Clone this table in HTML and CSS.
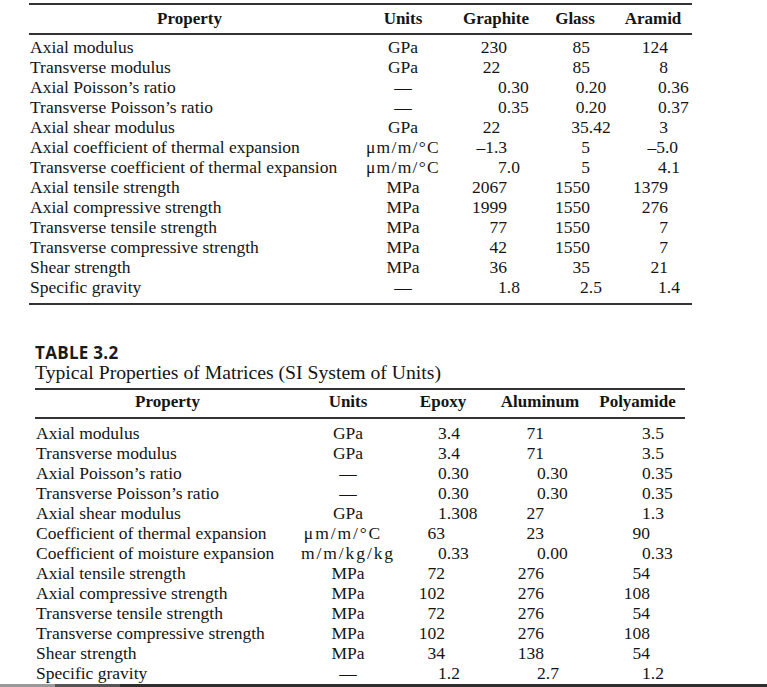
FILE: index.html
```html
<!DOCTYPE html>
<html lang="en">
<head>
<meta charset="utf-8">
<title>Typical Properties of Fibers and Matrices</title>
<link rel="stylesheet" href="styles.css">
</head>
<body>
<main class="page">
  <table class="data t1">
    <colgroup>
      <col class="w-prop1"><col class="w-unit1"><col class="w-v1"><col class="w-v2"><col class="w-v3">
    </colgroup>
    <thead>
      <tr>
        <th class="h-prop1">Property</th>
        <th class="h-unit">Units</th>
        <th>Graphite</th>
        <th class="h-shift">Glass</th>
        <th class="h-shift">Aramid</th>
      </tr>
    </thead>
    <tbody>
      <tr><td class="prop">Axial modulus</td><td class="unit">GPa</td><td class="gi">230</td><td class="si">85</td><td class="ai">124</td></tr>
      <tr><td class="prop">Transverse modulus</td><td class="unit">GPa</td><td class="gc">22</td><td class="si">85</td><td class="ai">8</td></tr>
      <tr><td class="prop">Axial Poisson’s ratio</td><td class="unit">—</td><td class="gd">0.30</td><td class="sd">0.20</td><td class="ad">0.36</td></tr>
      <tr><td class="prop">Transverse Poisson’s ratio</td><td class="unit">—</td><td class="gd">0.35</td><td class="sd">0.20</td><td class="ad">0.37</td></tr>
      <tr><td class="prop">Axial shear modulus</td><td class="unit">GPa</td><td class="gc">22</td><td class="sd">35.42</td><td class="ai">3</td></tr>
      <tr><td class="prop">Axial coefficient of thermal expansion</td><td class="unit sp1">μm/m/°C</td><td class="gi">–1.3</td><td class="si">5</td><td class="an">–5.0</td></tr>
      <tr><td class="prop">Transverse coefficient of thermal expansion</td><td class="unit sp1">μm/m/°C</td><td class="gd">7.0</td><td class="si">5</td><td class="ad">4.1</td></tr>
      <tr><td class="prop">Axial tensile strength</td><td class="unit">MPa</td><td class="gi">2067</td><td class="si">1550</td><td class="ai">1379</td></tr>
      <tr><td class="prop">Axial compressive strength</td><td class="unit">MPa</td><td class="gi">1999</td><td class="si">1550</td><td class="ai">276</td></tr>
      <tr><td class="prop">Transverse tensile strength</td><td class="unit">MPa</td><td class="gi">77</td><td class="si">1550</td><td class="ai">7</td></tr>
      <tr><td class="prop">Transverse compressive strength</td><td class="unit">MPa</td><td class="gi">42</td><td class="si">1550</td><td class="ai">7</td></tr>
      <tr><td class="prop">Shear strength</td><td class="unit">MPa</td><td class="gi">36</td><td class="si">35</td><td class="ai">21</td></tr>
      <tr><td class="prop">Specific gravity</td><td class="unit">—</td><td class="gd">1.8</td><td class="sd">2.5</td><td class="ad">1.4</td></tr>
    </tbody>
  </table>

  <section class="table2">
    <div class="caption">
      <div class="label">TABLE 3.2</div>
      <div class="title">Typical Properties of Matrices (SI System of Units)</div>
    </div>
    <table class="data t2">
      <colgroup>
        <col class="w-prop2"><col class="w-unit2"><col class="w-e"><col class="w-l"><col class="w-p">
      </colgroup>
      <thead>
        <tr>
          <th class="h-prop2">Property</th>
          <th class="h-unit2">Units</th>
          <th class="h-epoxy">Epoxy</th>
          <th>Aluminum</th>
          <th class="h-poly">Polyamide</th>
        </tr>
      </thead>
      <tbody>
        <tr><td class="prop">Axial modulus</td><td class="unit">GPa</td><td class="ed">3.4</td><td class="li">71</td><td class="pd">3.5</td></tr>
        <tr><td class="prop">Transverse modulus</td><td class="unit">GPa</td><td class="ed">3.4</td><td class="li">71</td><td class="pd">3.5</td></tr>
        <tr><td class="prop">Axial Poisson’s ratio</td><td class="unit">—</td><td class="ed">0.30</td><td class="ld">0.30</td><td class="pd">0.35</td></tr>
        <tr><td class="prop">Transverse Poisson’s ratio</td><td class="unit">—</td><td class="ed">0.30</td><td class="ld">0.30</td><td class="pd">0.35</td></tr>
        <tr><td class="prop">Axial shear modulus</td><td class="unit">GPa</td><td class="ed">1.308</td><td class="li">27</td><td class="pd">1.3</td></tr>
        <tr><td class="prop">Coefficient of thermal expansion</td><td class="unit sp2 u-left">μm/m/°C</td><td class="ei">63</td><td class="li">23</td><td class="pi">90</td></tr>
        <tr><td class="prop">Coefficient of moisture expansion</td><td class="unit sp2">m/m/kg/kg</td><td class="ed">0.33</td><td class="ld">0.00</td><td class="pd">0.33</td></tr>
        <tr><td class="prop">Axial tensile strength</td><td class="unit">MPa</td><td class="ei">72</td><td class="li">276</td><td class="pi">54</td></tr>
        <tr><td class="prop">Axial compressive strength</td><td class="unit">MPa</td><td class="ei">102</td><td class="li">276</td><td class="pi">108</td></tr>
        <tr><td class="prop">Transverse tensile strength</td><td class="unit">MPa</td><td class="ei">72</td><td class="li">276</td><td class="pi">54</td></tr>
        <tr><td class="prop">Transverse compressive strength</td><td class="unit">MPa</td><td class="ei">102</td><td class="li">276</td><td class="pi">108</td></tr>
        <tr><td class="prop">Shear strength</td><td class="unit">MPa</td><td class="ei">34</td><td class="li">138</td><td class="pi">54</td></tr>
        <tr><td class="prop">Specific gravity</td><td class="unit">—</td><td class="ed">1.2</td><td class="ld">2.7</td><td class="pd">1.2</td></tr>
      </tbody>
    </table>
  </section>
  <div class="page-edge"></div>
</main>
</body>
</html>
```

FILE: styles.css
```css
html, body {
  margin: 0;
  padding: 0;
  background: #ffffff;
}

.page {
  width: 767px;
  height: 687px;
  overflow: hidden;
  color: #141414;
  font-family: "Liberation Serif", "Times New Roman", serif;
  font-size: 17.5px;
  line-height: 20px;
}

/* ---------- tables ---------- */
.data {
  border-collapse: separate;
  border-spacing: 0;
  table-layout: fixed;
}

.data th,
.data td {
  padding: 0;
  height: 20px;
  line-height: 20px;
  white-space: nowrap;
  font-weight: normal;
  vertical-align: top;
}

.data th {
  font-weight: bold;
  font-size: 17px;
  text-align: center;
  border-top: 2px solid #333;
  border-bottom: 2px solid #333;
}

.t1 {
  width: 663px;
  margin: 3px 0 0 29px;
}

.t1 th {
  padding-top: 4px;
  padding-bottom: 4px;
}

.t1 tbody tr:first-child td { padding-top: 2px; }
.t1 tbody tr:last-child td {
  padding-bottom: 6px;
  border-bottom: 2px solid #333;
}

.w-prop1 { width: 321px; }
.w-unit1 { width: 106px; }
.w-v1 { width: 80px; }
.w-v2 { width: 78px; }
.w-v3 { width: 78px; }

.h-prop1 { padding-right: 9px; }
.h-shift { padding-left: 14px; }

.prop { text-align: left; padding-left: 1px !important; }
.unit { text-align: center; }
.sp1 { letter-spacing: 1.3px; }
.sp2 { letter-spacing: 1.9px; }
.u-left { padding-right: 10px !important; }

/* graphite */
.gi { text-align: right; padding-right: 29px !important; }
.gd { text-align: left; padding-left: 42px !important; }
.gc { text-align: center; padding-right: 9px !important; }
/* glass */
.si { text-align: right; padding-right: 24px !important; }
.sd { text-align: center; padding-left: 32px !important; }
/* aramid */
.ai { text-align: right; padding-right: 24px !important; }
.ad { text-align: left; padding-left: 44px !important; }
.an { text-align: right; padding-right: 14px !important; }

/* ---------- table 3.2 ---------- */
.table2 {
  margin: 40px 0 0 35px;
}

.caption .label {
  font-family: "Open Sans", "DejaVu Sans", sans-serif;
  font-weight: 700;
  font-size: 17px;
  letter-spacing: 0.3px;
  line-height: 16px;
  color: #1a1a1a;
}

.caption .title {
  font-size: 19.7px;
  line-height: 20px;
  margin-top: 1px;
  margin-bottom: 6px;
}

.t2 {
  width: 650px;
}

.t2 th {
  padding-top: 2px;
  padding-bottom: 5px;
}

.t2 tbody tr:first-child td { padding-top: 4px; }
.t2 tbody tr:last-child td { padding-bottom: 1px; }

.w-prop2 { width: 265px; }
.w-unit2 { width: 96px; }
.w-e { width: 94px; }
.w-l { width: 100px; }
.w-p { width: 95px; }

.h-prop2 { padding-right: 23px; }
.h-unit2 { padding-right: 4px; }
.h-epoxy { padding-left: 8px; }
.h-poly { padding-left: 15px; }

/* epoxy */
.ei { text-align: right; padding-right: 45px !important; }
.ed { text-align: left; padding-left: 42px !important; }
/* aluminum */
.li { text-align: right; padding-right: 46px !important; }
.ld { text-align: left; padding-left: 47px !important; }
/* polyamide */
.pi { text-align: right; padding-right: 35px !important; }
.pd { text-align: left; padding-left: 52px !important; }

/* bottom edge of the scanned page */
.page-edge {
  height: 3px;
  width: 767px;
  background: linear-gradient(to right, #9a9a9a 0, #9a9a9a 55px, #555 55px, #555 120px, #2e2e2e 120px);
}
```
